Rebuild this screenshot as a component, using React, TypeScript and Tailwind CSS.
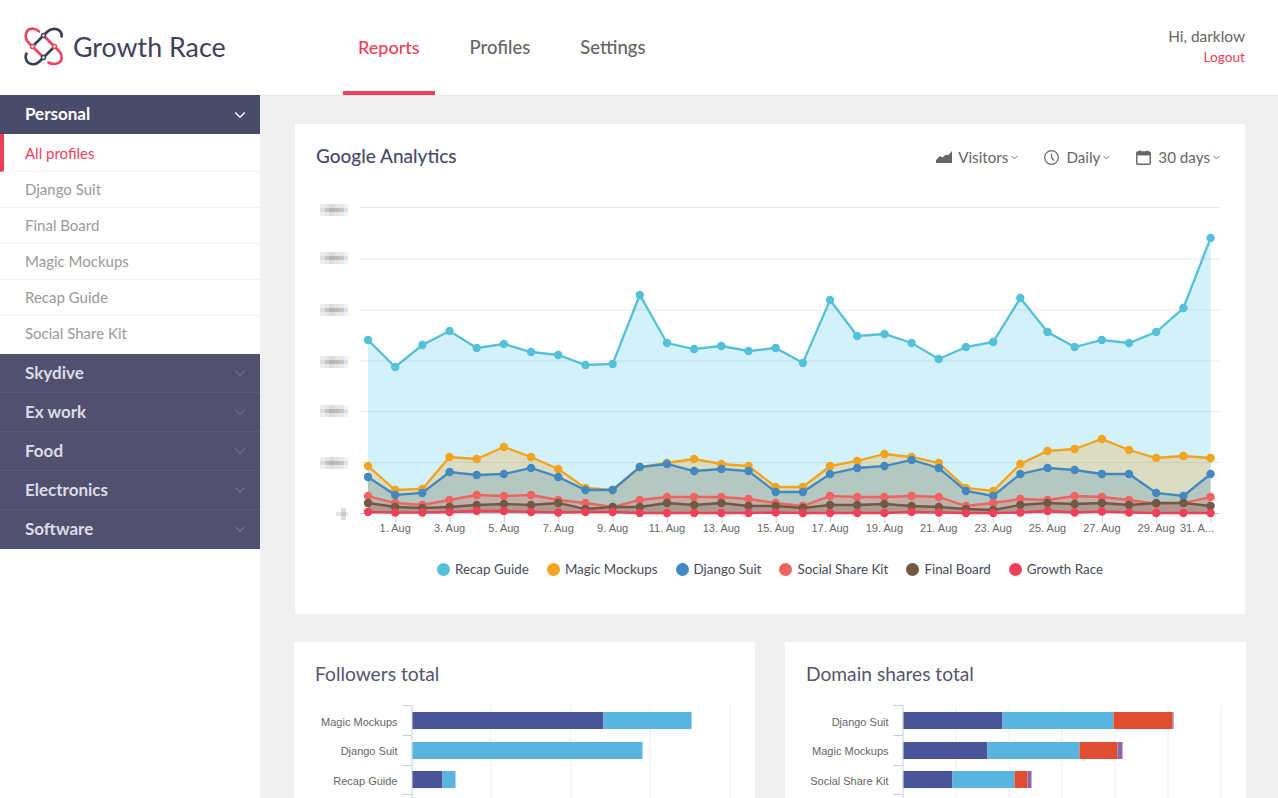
import React from 'react'
import { ChevronDown } from 'lucide-react'

const xAt = (i: number) => 368 + i * 27.18
const BASE = 513

const series = [
  { name: 'Recap Guide', color: '#54c1d9', fill: '#4fc7e3', ys: [340,367,345,331,348,344,352,355,365,364,295,343,349,346,351,348,363,300,336,334,343,359,347,342,298,332,347,340,343,332,308,238] },
  { name: 'Magic Mockups', color: '#f2a31f', fill: '#f2a31f', ys: [466,490,489,457,459,447,457,469,488,490,467,463,459,464,466,487,487,466,461,454,457,463,488,491,464,451,449,439,450,458,456,458] },
  { name: 'Django Suit', color: '#4289c1', fill: '#4289c1', ys: [477,495,493,472,475,474,468,477,490,490,467,464,471,469,471,492,492,474,468,466,460,468,491,496,474,468,470,474,474,493,496,474] },
  { name: 'Social Share Kit', color: '#ee6460', fill: '#ee6460', ys: [496,503,505,500,495,496,495,500,503,507,500,497,497,497,499,503,506,496,497,497,496,497,506,503,499,500,496,497,500,504,503,497] },
  { name: 'Final Board', color: '#6e5a45', fill: '#6e5a45', ys: [503,507,508,507,505,504,505,503,509,507,507,503,505,503,506,506,508,505,505,504,506,507,509,510,505,503,504,503,505,503,503,506] },
  { name: 'Growth Race', color: '#ee4059', fill: '#ee4059', ys: [512,512.5,512.5,512,511,511,512,512.5,512,512,513,513,513,513,513,512.5,513,513,513,513,512,512.5,513,513,512.5,511,512.5,511.5,512.5,513,513,513] },
]

const gridYs = [207.5, 259, 310, 361, 411.5, 462.5]
const labelYs = [210, 258, 310, 362, 411, 462.5]

const tickLabels = ['1. Aug','3. Aug','5. Aug','7. Aug','9. Aug','11. Aug','13. Aug','15. Aug','17. Aug','19. Aug','21. Aug','23. Aug','25. Aug','27. Aug','29. Aug']

// the y axis numbers are pixelated out in the original
function Blurred({ y }: { y: number }) {
  const mid = ['#e6dad6', '#c4c4c8', '#b6b6ba', '#c2b8b8', '#c4c8cc', '#dde2f0']
  const edge = ['#f2ecea', '#e6e6e6', '#dcdcde', '#e6e4e4', '#e6e8ea', '#f2f4fa']
  return (
    <g shapeRendering="crispEdges">
      {mid.map((_, c) => (
        <g key={c}>
          <rect x={320 + c * 4.7} y={y - 6} width={4.7} height={4} fill={edge[c]} />
          <rect x={320 + c * 4.7} y={y - 2} width={4.7} height={4} fill={mid[c]} />
          <rect x={320 + c * 4.7} y={y + 2} width={4.7} height={4} fill={edge[c]} />
        </g>
      ))}
    </g>
  )
}

function BlurredZero() {
  return (
    <g shapeRendering="crispEdges">
      <rect x={336} y={512} width={5} height={4} fill="#f0e2de" />
      <rect x={341} y={508} width={5} height={4} fill="#dcdce2" />
      <rect x={341} y={512} width={5} height={4} fill="#c8c8d0" />
      <rect x={341} y={516} width={5} height={4} fill="#dcdce2" />
      <rect x={346} y={512} width={2} height={4} fill="#e4e8f2" />
    </g>
  )
}

function LineChart() {
  return (
    <svg width={950} height={350} viewBox="295 190 950 350" className="block">
      {gridYs.map(y => <line key={y} x1={360} x2={1219} y1={y} y2={y} stroke="#e8e8e8" strokeWidth={1} />)}
      {labelYs.map(y => <Blurred key={y} y={y} />)}
      <BlurredZero />
      {tickLabels.map((l, i) => (
        <g key={l}>
          <line x1={xAt(1 + i * 2) + 0.5} x2={xAt(1 + i * 2) + 0.5} y1={513} y2={523} stroke="#c0d0e0" />
          <text x={xAt(1 + i * 2)} y={532} textAnchor="middle" fontSize={11} fill="#666666" style={{ fontFamily: '"Liberation Sans", Arial, sans-serif' }}>{l}</text>
        </g>
      ))}
      <line x1={xAt(31) + 0.5} x2={xAt(31) + 0.5} y1={513} y2={523} stroke="#c0d0e0" />
      <text x={1197} y={532} textAnchor="middle" fontSize={11} fill="#666666" style={{ fontFamily: '"Liberation Sans", Arial, sans-serif' }}>31. A...</text>
      {series.map(s => {
        const pts = s.ys.map((y, i) => `${xAt(i)},${y}`).join(' ')
        return <polygon key={s.name} points={`${xAt(0)},${BASE} ${pts} ${xAt(31)},${BASE}`} fill={s.fill} fillOpacity={0.25} />
      })}
      <line x1={360} x2={1219} y1={513.5} y2={513.5} stroke="#c0d0e0" />
      {series.map(s => (
        <g key={s.name}>
          <polyline points={s.ys.map((y, i) => `${xAt(i)},${y}`).join(' ')} fill="none" stroke={s.color} strokeWidth={2.3} />
          {s.ys.map((y, i) => <circle key={i} cx={xAt(i)} cy={y} r={4.2} fill={s.color} />)}
        </g>
      ))}
    </svg>
  )
}

type Seg = { w: number; c: string }

function BarChart({ axis, grid, rows, labelX }: { axis: number; grid: number[]; labelX: number; rows: { label: string; segs: Seg[] }[] }) {
  return (
    <svg width={440} height={110} viewBox={`${axis - 117.5} 698 440 110`} className="block">
      {grid.map(x => <line key={x} x1={x + 0.5} x2={x + 0.5} y1={706} y2={798} stroke="#eeeeee" />)}
      <line x1={axis + 0.5} x2={axis + 0.5} y1={705} y2={798} stroke="#c0d0e0" />
      {[705.5, 735.5, 765.5, 794.5].map(y => <line key={y} x1={axis - 9} x2={axis} y1={y} y2={y} stroke="#c0d0e0" />)}
      {rows.map((r, i) => {
        const y = [712, 742, 771][i]
        const base = [726, 755, 785][i]
        let x = axis + 1
        return (
          <g key={r.label}>
            <text x={labelX} y={base} textAnchor="end" fontSize={11} fill="#666666" style={{ fontFamily: '"Liberation Sans", Arial, sans-serif' }}>{r.label}</text>
            {r.segs.map((s, j) => {
              const el = <rect key={j} x={x} y={y} width={s.w} height={17} fill={s.c} />
              x += s.w
              return el
            })}
          </g>
        )
      })}
    </svg>
  )
}

function Logo() {
  return (
    <svg width={40} height={40} viewBox="24 27 40 40" fill="none" strokeWidth={2.6} strokeLinecap="round" className="block">
      <path d="M32.5 46.5 L43.5 35.5 L47 32 C51 28 57 28 60 31 C61.5 33 62 35 61.5 36.5" stroke="#3a3d57" />
      <path d="M54.5 46.5 L43.5 57.5 L39.5 61.5 C36 65 31 65 28 62.5 C25.5 60 25 56 26.5 53.5" stroke="#3a3d57" />
      <path d="M39 31.5 C36 28 31 28 28 30 C25 33 25 38 27.5 41.5 L32.5 46.5 L43.5 57.5" stroke="#ee4059" />
      <path d="M43.5 35.5 L54.5 46.5 L60 52 C62.5 56 62 60 60 62 C57 64.5 52 64.5 48.5 62.5" stroke="#ee4059" />
      <circle cx={43.5} cy={35.5} r={2} fill="#fff" stroke="#3a3d57" strokeWidth={1.5} />
      <circle cx={32.5} cy={46.5} r={2} fill="#fff" stroke="#ee4059" strokeWidth={1.5} />
      <circle cx={54.5} cy={46.5} r={2} fill="#fff" stroke="#ee4059" strokeWidth={1.5} />
      <circle cx={43.5} cy={57.5} r={2} fill="#fff" stroke="#3a3d57" strokeWidth={1.5} />
    </svg>
  )
}

function AreaIcon() {
  return (
    <svg width={16} height={12} viewBox="0 0 16 12" fill="#666666" className="block">
      <path d="M0 12 L0 9 L4 5 L6.5 6.5 L10 3.5 L12 4.5 L16 0 L16 12 Z" />
    </svg>
  )
}

function ClockIcon() {
  return (
    <svg width={15} height={15} viewBox="0 0 15 15" fill="none" stroke="#666666" strokeWidth={1.2} className="block">
      <circle cx={7.5} cy={7.5} r={6.8} />
      <path d="M7.5 3.5 V7.5 L10 10.5" />
    </svg>
  )
}

function CalendarIcon() {
  return (
    <svg width={15} height={15} viewBox="0 0 15 15" fill="none" className="block">
      <rect x={0.8} y={2} width={13.4} height={12.2} rx={1} stroke="#666666" strokeWidth={1.4} />
      <rect x={0.8} y={2} width={13.4} height={3.4} fill="#666666" />
      <rect x={3} y={0.5} width={1.6} height={2.5} fill="#666666" />
      <rect x={10.4} y={0.5} width={1.6} height={2.5} fill="#666666" />
    </svg>
  )
}

const Caret = () => <ChevronDown size={11} strokeWidth={1.7} className="text-[#555] ml-[1px] mt-[1px]" />

const personal = ['Django Suit', 'Final Board', 'Magic Mockups', 'Recap Guide', 'Social Share Kit']
const groups = ['Skydive', 'Ex work', 'Food', 'Electronics', 'Software']

const dark = '#4a5499'
const light = '#5ab4e0'
const red = '#e04e32'
const purple = '#8c68aa'

export default function App() {
  return (
    <div className="h-[798px] w-full overflow-hidden bg-[#f0f0f0] text-[#555]" style={{ fontFamily: 'Lato, "Noto Sans", sans-serif' }}>
      <header className="h-[96px] bg-white border-b border-[#e6e6e6] flex items-stretch">
        <div className="w-[343px] shrink-0 flex items-center pl-[24px] pb-[2px] gap-[9px]">
          <Logo />
          <span className="text-[26.8px] text-[#3f415c] leading-none pt-[2px]">Growth Race</span>
        </div>
        <nav className="flex gap-[20px] h-[95px]">
          <a className="px-[15px] flex items-center text-[18px] font-medium text-[#ee4059] border-b-4 border-[#ee4059] pt-[4px]">Reports</a>
          <a className="px-[15px] flex items-center text-[18.5px] font-medium text-[#666] border-b-4 border-transparent pt-[5px]">Profiles</a>
          <a className="px-[15px] flex items-center text-[18.5px] font-medium text-[#666] border-b-4 border-transparent pt-[5px]">Settings</a>
        </nav>
        <div className="ml-auto pr-[33px] pt-[26px] text-right">
          <div className="text-[15.4px] leading-[20px] text-[#666]">Hi, darklow</div>
          <div className="text-[13.7px] leading-[20px] mt-[1px] text-[#ee4059]">Logout</div>
        </div>
      </header>

      <div className="flex h-[702px]">
        <aside className="w-[260px] shrink-0 bg-white -mt-[1px]">
          <div className="h-[39px] bg-[#4a4a6a] flex items-center justify-between pl-[25px] pr-[11px] pb-[2px] text-white text-[17px] font-bold">
            Personal
            <ChevronDown size={18} strokeWidth={1.6} className="text-white mt-[2px]" />
          </div>
          <ul className="pb-[2px]">
            <li className="h-[38px] pt-[2px] flex items-center pl-[21px] border-l-4 border-[#ee4059] text-[#ee4059] text-[15px] border-b border-b-[#f2f2f2]">All profiles</li>
            {personal.map((p, i) => (
              <li key={p} className={`h-[36px] flex items-center pl-[25px] text-[15px] text-[#9a9a9a] border-b ${i < personal.length - 1 ? 'border-[#f2f2f2]' : 'border-transparent'}`}>{p}</li>
            ))}
          </ul>
          <div className="bg-[#52506f]">
            {groups.map((g, i) => (
              <div key={g} className={`h-[39px] flex items-center justify-between pl-[25px] pr-[11px] text-[#dcdce8] text-[17px] font-bold border-b ${i < groups.length - 1 ? 'border-[#5c5a79]' : 'border-transparent'}`}>
                {g}
                <ChevronDown size={18} strokeWidth={1.4} className="text-[#77769a]" />
              </div>
            ))}
          </div>
        </aside>

        <main className="flex-1 pl-[35px] pr-[33px] pt-[28px]">
          <section className="bg-white h-[490px] w-[950px]">
            <div className="h-[66px] flex items-center justify-between pl-[21px] pr-[23px] pb-[2px]">
              <h2 className="text-[19px] font-medium text-[#4a4a6a]">Google Analytics</h2>
              <div className="flex items-center text-[15.2px] text-[#666] pt-[3px]">
                <span className="flex items-center gap-[6px]"><AreaIcon /><span className="flex items-center">Visitors<Caret /></span></span>
                <span className="flex items-center gap-[7px] ml-[24px]"><ClockIcon /><span className="flex items-center">Daily<Caret /></span></span>
                <span className="flex items-center gap-[7px] ml-[24px]"><CalendarIcon /><span className="flex items-center">30 days<Caret /></span></span>
              </div>
            </div>
            <LineChart />
            <div className="flex justify-center gap-[18px] pt-[19px] text-[13.4px] text-[#4a4a5a]">
              {series.map(s => (
                <span key={s.name} className="flex items-center gap-[5px]">
                  <span className="w-[13px] h-[13px] rounded-full" style={{ background: s.color }} />
                  {s.name}
                </span>
              ))}
            </div>
          </section>

          <div className="flex gap-[30px] mt-[28px] -ml-[1px]">
            <section className="bg-white w-[461px] h-[200px] pl-[21px]">
              <h3 className="text-[19.2px] text-[#55556f] pt-[19px] leading-[26px]">Followers total</h3>
              <div className="-ml-[21px] mt-[11px]">
                <BarChart axis={411} labelX={397} grid={[490, 570, 649, 729]} rows={[
                  { label: 'Magic Mockups', segs: [{ w: 191, c: dark }, { w: 88, c: light }] },
                  { label: 'Django Suit', segs: [{ w: 230, c: light }] },
                  { label: 'Recap Guide', segs: [{ w: 30, c: dark }, { w: 13, c: light }] },
                ]} />
              </div>
            </section>
            <section className="bg-white w-[461px] h-[200px] pl-[21px]">
              <h3 className="text-[19.2px] text-[#55556f] pt-[19px] leading-[26px]">Domain shares total</h3>
              <div className="-ml-[21px] mt-[11px]">
                <BarChart axis={902} labelX={888} grid={[955, 1008, 1061, 1114, 1167, 1220]} rows={[
                  { label: 'Django Suit', segs: [{ w: 99, c: dark }, { w: 111, c: light }, { w: 59, c: red }, { w: 1, c: purple }] },
                  { label: 'Magic Mockups', segs: [{ w: 84, c: dark }, { w: 92, c: light }, { w: 38, c: red }, { w: 5, c: purple }] },
                  { label: 'Social Share Kit', segs: [{ w: 49, c: dark }, { w: 62, c: light }, { w: 13, c: red }, { w: 4, c: purple }] },
                ]} />
              </div>
            </section>
          </div>
        </main>
      </div>
    </div>
  )
}
